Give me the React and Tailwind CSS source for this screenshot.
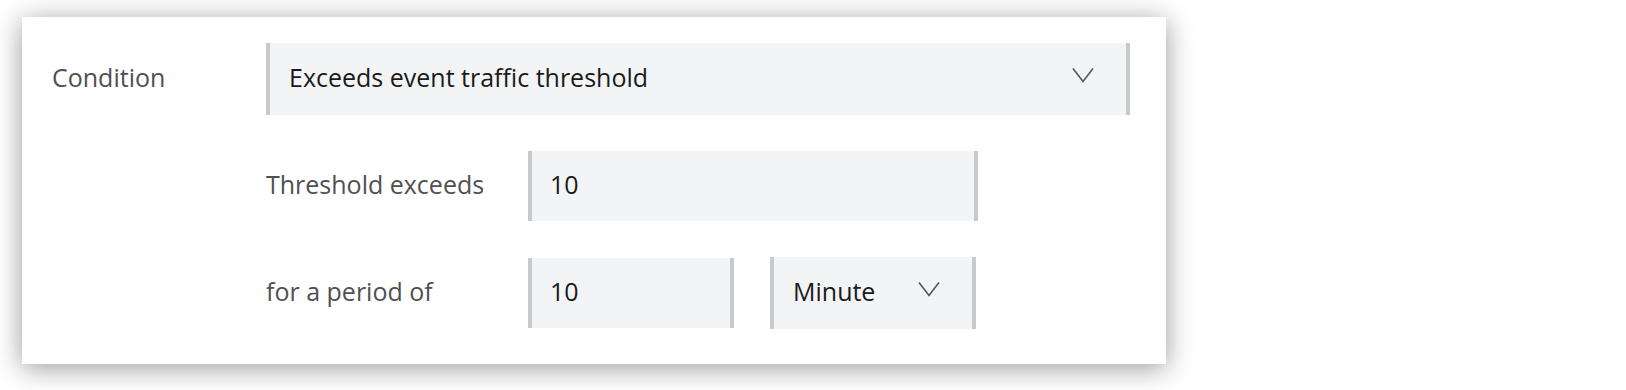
function Chevron() {
  return (
    <svg width="22" height="16" viewBox="0 0 22 16" fill="none" className="shrink-0 -mt-[4px]">
      <path d="M1 1.5L11 14.5L21 1.5" stroke="#555" strokeWidth="1.6" />
    </svg>
  );
}

function Field({ value, className = "" }) {
  return (
    <div
      className={`h-[70px] bg-[#f3f4f6] border-l-4 border-r-4 border-[#c8c9cb] flex items-center pl-[18px] pb-[4px] text-[#1a1a1a] ${className}`}
    >
      {value}
    </div>
  );
}

function Select({ value, className = "" }) {
  return (
    <div
      className={`h-[72px] bg-[#f3f4f6] border-l-4 border-r-4 border-[#c8c9cb] flex items-center justify-between pl-[19px] pr-[32px] pb-[4px] text-[#1a1a1a] ${className}`}
    >
      <span>{value}</span>
      <Chevron />
    </div>
  );
}

export default function App() {
  return (
    <div className="w-[1626px] h-[390px] bg-white pt-[17px] font-['Open_Sans',sans-serif] text-[25px] leading-[34px]">
      <div className="ml-[22px] w-[1144px] bg-white shadow-[0_4px_26px_rgba(0,0,0,0.4)] pt-[26px] pb-[35px] pl-[30px] pr-[36px]">
        <div className="flex items-center">
          <div className="w-[214px] text-[#505050] -mt-[5px]">Condition</div>
          <Select value="Exceeds event traffic threshold" className="flex-1" />
        </div>
        <div className="ml-[214px] mt-[36px] flex flex-col gap-[36px]">
          <div className="flex items-center">
            <div className="w-[262px] text-[#505050] -mt-[4px]">Threshold exceeds</div>
            <Field value="10" className="w-[450px]" />
          </div>
          <div className="flex items-center">
            <div className="w-[262px] text-[#505050] -mt-[4px]">for a period of</div>
            <Field value="10" className="w-[206px]" />
            <Select value="Minute" className="w-[206px] ml-[36px]" />
          </div>
        </div>
      </div>
    </div>
  );
}
